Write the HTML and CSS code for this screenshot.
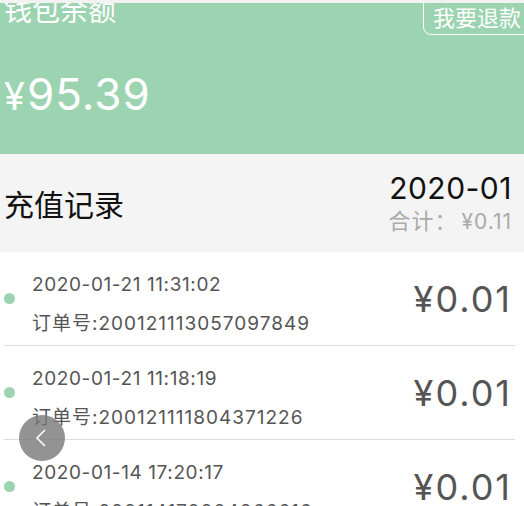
FILE: index.html
```html
<!DOCTYPE html>
<html lang="zh-CN">
<head>
    <meta charset="UTF-8">
    <meta name="viewport" content="width=device-width, initial-scale=1.0">
    <title>钱包余额</title>
    <link rel="stylesheet" href="styles.css">
</head>
<body>
    <div class="top-strip"></div>

    <!-- Wallet balance -->
    <div class="wallet">
        <div class="wallet-head">
            <h2 class="wallet-title">钱包余额</h2>
            <button class="refund-btn">我要退款</button>
        </div>
        <div class="balance"><span class="yen">¥</span>95.39</div>
    </div>

    <!-- Recharge records -->
    <div class="record-head">
        <h3 class="record-title">充值记录</h3>
        <div class="record-month">
            <div class="month">2020-01</div>
            <div class="total"><span class="total-label">合计：</span>¥0.11</div>
        </div>
    </div>

    <ul class="record-list">
        <li class="record">
            <span class="dot"></span>
            <div class="record-info">
                <div class="time">2020-01-21 11:31:02</div>
                <div class="order">订单号:200121113057097849</div>
            </div>
            <div class="amount">¥0.01</div>
        </li>
        <li class="record">
            <span class="dot"></span>
            <div class="record-info">
                <div class="time">2020-01-21 11:18:19</div>
                <div class="order">订单号:200121111804371226</div>
            </div>
            <div class="amount">¥0.01</div>
        </li>
        <li class="record">
            <span class="dot"></span>
            <div class="record-info">
                <div class="time">2020-01-14 17:20:17</div>
                <div class="order">订单号:200114172004066616</div>
            </div>
            <div class="amount">¥0.01</div>
        </li>
        <li class="record">
            <span class="dot"></span>
            <div class="record-info">
                <div class="time">2020-01-14 17:02:45</div>
                <div class="order">订单号:200114170245118302</div>
            </div>
            <div class="amount">¥0.01</div>
        </li>
    </ul>

    <!-- Floating back button -->
    <a class="back-btn" href="#">
        <svg width="14" height="20" viewBox="0 0 14 20">
            <path d="M10 2 L2 10 L10 18" fill="none" stroke="#fff" stroke-width="1.6"/>
        </svg>
    </a>
</body>
</html>
```

FILE: styles.css
```css
body {
    font-family: Inter, "Noto Sans CJK SC", sans-serif;
    margin: 0;
    background-color: #fff;
    color: #555;
}
h2, h3 {
    margin: 0;
    font-weight: normal;
}
.top-strip {
    height: 3px;
    background-color: #f2f2f2;
}
.wallet {
    height: 151px;
    background-color: #9cd3b0;
    overflow: hidden;
    color: #fff;
}
.wallet-head {
    display: flex;
    justify-content: space-between;
    align-items: flex-start;
}
.wallet-title {
    margin: -6px 0 0 4px;
    font-size: 28px;
    line-height: 28px;
}
.refund-btn {
    margin: -6px -20px 0 0;
    padding: 7px 22px 7px 9px;
    font-family: "Noto Sans CJK SC", sans-serif;
    font-size: 22px;
    line-height: 22px;
    color: #fff;
    background: transparent;
    border: 1px solid #fff;
    border-radius: 8px;
}
.balance {
    margin-top: 37px;
    padding-left: 4px;
    font-size: 44px;
    line-height: 44px;
    letter-spacing: 1px;
}
.balance .yen {
    font-size: 38px;
    letter-spacing: 2px;
}
.record-head {
    display: flex;
    justify-content: space-between;
    align-items: center;
    height: 98px;
    padding: 0 12px 0 4px;
    background-color: #f4f4f4;
}
.record-title {
    font-family: "Noto Sans CJK SC", sans-serif;
    font-size: 30px;
    color: #111;
}
.record-month {
    text-align: right;
}
.month {
    font-size: 30px;
    line-height: 36px;
    letter-spacing: 0.5px;
    color: #111;
}
.total {
    font-size: 21px;
    line-height: 30px;
    letter-spacing: 1px;
    color: #aaa;
}
.total-label {
    font-size: 22px;
    margin-right: 4px;
}
.record-list {
    list-style: none;
    margin: 0;
    padding: 0;
}
.record {
    display: flex;
    align-items: center;
    height: 93px;
    margin: 0 9px 0 4px;
    border-bottom: 1px solid #ddd;
}
.dot {
    width: 11px;
    height: 11px;
    margin-right: 17px;
    border-radius: 50%;
    background-color: #9cd3b0;
}
.record-info {
    align-self: flex-start;
    padding-top: 20px;
    font-size: 19px;
    line-height: 26px;
}
.time {
    letter-spacing: 0.6px;
}
.order {
    margin-top: 13px;
    letter-spacing: 1px;
}
.amount {
    margin-left: auto;
    padding-right: 3px;
    font-size: 36px;
    letter-spacing: 2px;
}
.back-btn {
    position: fixed;
    left: 19px;
    top: 415px;
    width: 46px;
    height: 46px;
    border-radius: 50%;
    background-color: rgba(120, 120, 120, 0.8);
    display: flex;
    align-items: center;
    justify-content: center;
}
```
